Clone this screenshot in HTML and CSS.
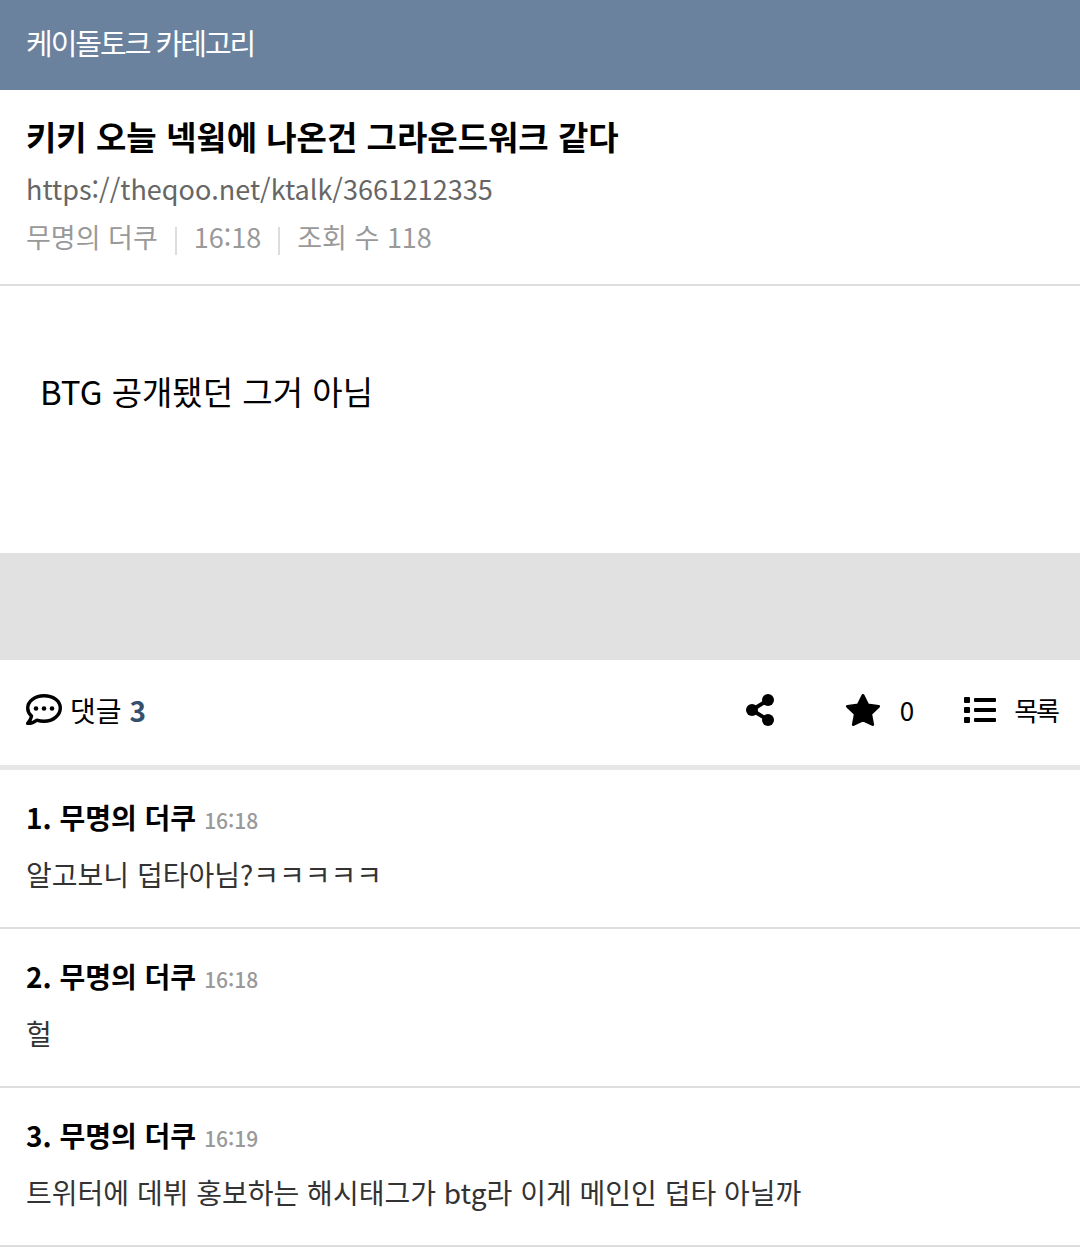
FILE: index.html
```html
<!DOCTYPE html>
<html lang="ko">
<head>
  <meta charset="UTF-8">
  <meta name="viewport" content="width=device-width, initial-scale=1">
  <title>키키 오늘 넥윜에 나온건 그라운드워크 같다</title>
  <link rel="stylesheet" href="styles.css">
</head>
<body>
  <header class="board-header">
    <a href="#">케이돌토크 카테고리</a>
  </header>

  <main>
    <div class="read-header">
      <h1>키키 오늘 넥윜에 나온건 그라운드워크 같다</h1>
      <a class="permalink" href="#">https://theqoo.net/ktalk/3661212335</a>
      <div class="meta">
        <span>무명의 더쿠</span>
        <span>16:18</span>
        <span>조회 수 118</span>
      </div>
    </div>

    <article class="read-body">
      <p>BTG 공개됐던 그거 아님</p>
    </article>

    <div class="ad-space"></div>

    <div class="toolbar">
      <a class="comment-count" href="#comments">
        <svg width="36" height="32" viewBox="0 0 36 32" fill="none" stroke="#000" stroke-width="3.4" stroke-linejoin="round">
          <path d="M18 1.700C9 1.700 1.700 7.200 1.700 14c0 3.100 1.400 5.900 3.800 8.100C5 25 3.500 27.300 1.700 29.400c3.600 0 6.700-1.200 9-3.200 2.300.7 4.700 1.100 7.300 1.100 9 0 16.300-6 16.300-13.300S27 1.700 18 1.700z"/>
          <g fill="#000" stroke="none"><circle cx="10" cy="14.500" r="2.300"/><circle cx="18" cy="14.500" r="2.300"/><circle cx="26" cy="14.500" r="2.300"/></g>
        </svg>
        <span>댓글</span>
        <b>3</b>
      </a>
      <div class="actions">
        <button type="button" class="share" aria-label="공유">
          <svg width="30" height="32" viewBox="0 0 30 32">
            <path d="M6 16 22 6M6 16l16 10" stroke="#000" stroke-width="4"/>
            <circle cx="6" cy="16" r="6"/><circle cx="22" cy="6" r="6"/><circle cx="22" cy="26" r="6"/>
          </svg>
        </button>
        <button type="button" class="scrap">
          <svg width="34" height="32" viewBox="0 0 34 32">
            <path d="M17 1.500l4.700 9.400 10.800 1.500-7.900 7.500 2 10.600L17 26l-9.600 4.500 2-10.600-7.900-7.500 10.800-1.500z" stroke="#000" stroke-width="3" stroke-linejoin="round"/>
          </svg>
          <span>0</span>
        </button>
        <a class="list" href="#">
          <svg width="32" height="26" viewBox="0 0 32 26">
            <rect width="6" height="6" rx="1"/><rect y="10" width="6" height="6" rx="1"/><rect y="20" width="6" height="6" rx="1"/>
            <rect x="10" y="1" width="22" height="4" rx="1"/><rect x="10" y="11" width="22" height="4" rx="1"/><rect x="10" y="21" width="22" height="4" rx="1"/>
          </svg>
          <span>목록</span>
        </a>
      </div>
    </div>

    <ul class="comments" id="comments">
      <li>
        <div class="comment-head"><b>1. 무명의 더쿠</b> <time>16:18</time></div>
        <p>알고보니 덥타아님?ㅋㅋㅋㅋㅋ</p>
      </li>
      <li>
        <div class="comment-head"><b>2. 무명의 더쿠</b> <time>16:18</time></div>
        <p>헐</p>
      </li>
      <li>
        <div class="comment-head"><b>3. 무명의 더쿠</b> <time>16:19</time></div>
        <p>트위터에 데뷔 홍보하는 해시태그가 btg라 이게 메인인 덥타 아닐까</p>
      </li>
    </ul>
  </main>
</body>
</html>
```

FILE: styles.css
```css
* {
  box-sizing: border-box;
  margin: 0;
  padding: 0;
}

body {
  font-family: "Noto Sans CJK KR", sans-serif;
  font-size: 28px;
  background: #fff;
  color: #000;
}

a {
  color: inherit;
  text-decoration: none;
}

.board-header {
  padding: 20px 26px 26px;
  background: #6b829e;
  color: #fff;
  font-size: 29px;
  line-height: 44px;
  letter-spacing: -2px;
}

.read-header {
  padding: 20px 26px 26px;
  border-bottom: 2px solid #ddd;
}

h1 {
  font-size: 33px;
  line-height: 52px;
}

.permalink {
  display: block;
  font-size: 27px;
  line-height: 54px;
  color: #666;
}

.meta {
  display: flex;
  align-items: center;
  font-size: 27px;
  line-height: 42px;
  color: #999;
}

.meta span + span::before {
  content: "";
  display: inline-block;
  width: 2px;
  height: 28px;
  margin: 0 17px;
  background: #ddd;
  vertical-align: -7px;
}

.read-body {
  min-height: 267px;
  padding: 80px 40px;
  font-size: 33px;
  line-height: 50px;
}

.ad-space {
  height: 107px;
  background: #e1e1e1;
}

.toolbar {
  display: flex;
  justify-content: space-between;
  align-items: center;
  height: 110px;
  padding: 0 22px 6px 26px;
  border-bottom: 5px solid #e7e7e7;
}

.comment-count {
  display: flex;
  align-items: center;
  gap: 8px;
}

.comment-count b {
  color: #34506e;
}

.actions {
  display: flex;
  align-items: center;
}

.actions button,
.actions a {
  display: flex;
  align-items: center;
  gap: 18px;
  background: none;
  border: none;
  font: inherit;
  font-size: 26px;
  letter-spacing: -2px;
  cursor: pointer;
}

.actions .scrap {
  gap: 20px;
  margin: 0 52px 0 70px;
}

.comments {
  list-style: none;
}

.comments li {
  padding: 22px 26px 24px;
  border-bottom: 2px solid #ddd;
}

.comment-head {
  display: flex;
  align-items: baseline;
  gap: 8px;
  line-height: 50px;
}

.comment-head time {
  font-size: 21px;
  font-weight: 500;
  color: #999;
}

.comments p {
  line-height: 58px;
  color: #333;
}
```
